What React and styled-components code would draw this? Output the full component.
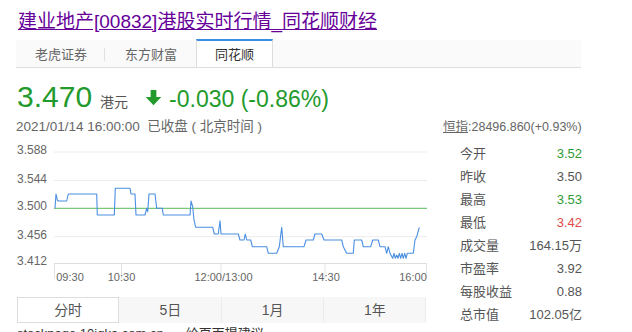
import React from "react";
import styled, { createGlobalStyle } from "styled-components";

const GlobalStyle = createGlobalStyle`
  body {
    margin: 0;
    background: #fff;
    font-family: "Liberation Sans", "Noto Sans CJK SC", sans-serif;
  }
`;

const Page = styled.div`
  width: 632px;
  height: 332px;
  overflow: hidden;
  box-sizing: border-box;
  padding: 10px 0 0 16px;
`;

const Title = styled.a`
  display: inline-block;
  margin-left: 2px;
  font-size: 19px;
  line-height: 24px;
  color: #660099;
  text-decoration: underline;
`;

const TabBar = styled.div`
  display: flex;
  width: 565px;
  height: 27px;
  margin-top: 6px;
  background: #fafafa;
  border-bottom: 1px solid #dddddd;
`;

const Tab = styled.div`
  position: relative;
  padding: 0 18px;
  font-size: 13px;
  line-height: 27px;
  color: ${(p) => (p.$active ? "#333" : "#666")};
  background: ${(p) => (p.$active ? "#fff" : "transparent")};
  box-sizing: border-box;
  height: ${(p) => (p.$active ? "28px" : "27px")};
  border-top: 2px solid ${(p) => (p.$active ? "#3b8fe0" : "transparent")};
  border-left: 1px solid ${(p) => (p.$active ? "#dddddd" : "transparent")};
  border-right: 1px solid ${(p) => (p.$active ? "#dddddd" : "transparent")};
  margin-top: -1px;
  &::after {
    content: "";
    display: ${(p) => (p.$sep ? "block" : "none")};
    position: absolute;
    right: 0;
    top: 7px;
    width: 1px;
    height: 13px;
    background: #e0e0e0;
  }
`;

const PriceRow = styled.div`
  display: flex;
  align-items: baseline;
  height: 36px;
  margin-top: 11px;
  padding-left: 1px;
  color: #239a2c;
`;

const Price = styled.span`
  font-size: 30px;
  line-height: 36px;
`;

const Unit = styled.span`
  margin-left: 8px;
  font-size: 14px;
  color: #555;
`;

const Arrow = styled.svg`
  align-self: center;
  margin: 0 7px 0 17px;
`;

const Change = styled.span`
  font-size: 23px;
`;

const Columns = styled.div`
  display: flex;
`;

const LeftCol = styled.div`
  width: 414px;
`;

const RightCol = styled.div`
  width: 140px;
  margin-left: 13px;
`;

const InfoLine = styled.div`
  margin-top: 2px;
  font-size: ${(p) => p.$size || "13.5px"};
  line-height: 20px;
  color: #666;
  white-space: nowrap;
  u {
    text-decoration: underline;
  }
`;

const ChartSvg = styled.svg`
  display: block;
  margin-top: 6px;
`;

const RangeTabs = styled.div`
  display: flex;
  width: 409px;
  height: 26px;
  margin: 12px 0 0 1px;
  background: #f7f7f7;
`;

const RangeTab = styled.div`
  flex: 1;
  box-sizing: border-box;
  text-align: center;
  font-size: 14px;
  line-height: 24px;
  color: #555;
  background: ${(p) => (p.$active ? "#fff" : "transparent")};
  border: 1px solid ${(p) => (p.$active ? "#dddddd" : "transparent")};
  border-right-color: ${(p) => (p.$active ? "#dddddd" : "#ececec")};
`;

const Footer = styled.div`
  display: flex;
  gap: 22px;
  margin: 3px 0 0 1px;
  font-size: 13px;
  line-height: 16px;
  color: #333;
`;

const StatsList = styled.div`
  margin-top: 5px;
`;

const StatRow = styled.div`
  display: flex;
  justify-content: space-between;
  width: 139px;
  box-sizing: border-box;
  padding-left: 17px;
  height: 23px;
  line-height: 23px;
  font-size: 13px;
  color: #555;
`;

const StatValue = styled.span`
  color: ${(p) => p.$color || "#555"};
`;

const stats = [
  { label: "今开", value: "3.52", color: "#2f9a37" },
  { label: "昨收", value: "3.50" },
  { label: "最高", value: "3.53", color: "#2f9a37" },
  { label: "最低", value: "3.42", color: "#e04a4a" },
  { label: "成交量", value: "164.15万" },
  { label: "市盈率", value: "3.92" },
  { label: "每股收益", value: "0.88" },
  { label: "总市值", value: "102.05亿" },
];

const yTicks = [
  { label: "3.588", y: 152 },
  { label: "3.544", y: 180.5 },
  { label: "3.500", y: 208.3 },
  { label: "3.456", y: 236.7 },
  { label: "3.412", y: 263.3 },
];

const xTicks = [
  { label: "09:30", x: 70, tick: 54.5 },
  { label: "10:30", x: 121.5, tick: 121.5 },
  { label: "12:00/13:00", x: 223.5, tick: 221 },
  { label: "14:30", x: 326, tick: 325 },
  { label: "16:00", x: 413, tick: 426.5 },
];

const line = [
  [55, 208.3], [56, 194], [57.3, 200], [58.3, 201], [66.7, 201], [68.3, 194],
  [96.7, 194], [97.3, 215], [114.3, 215], [115.3, 188.3], [130, 188.3],
  [131, 194], [135, 194], [136, 215], [145, 215], [146.7, 208.3],
  [147.7, 211.7], [149, 194], [155, 194], [156.7, 208.3], [162.3, 208.3],
  [163.3, 215], [190, 215], [191, 201], [192.7, 206.7], [194, 220],
  [195.7, 227.3], [212.7, 227.3], [214.3, 234], [218.3, 234], [220, 220.7],
  [221, 234], [238.3, 234], [240, 240], [244, 240], [245.3, 234],
  [246.7, 240], [250.7, 240], [252.3, 246.7], [266.7, 246.7], [268.3, 253.3],
  [276.7, 253.3], [279.3, 246.7], [281.7, 227.3], [283.3, 246.7],
  [304, 246.7], [306, 240], [313.3, 240], [315, 234], [321.7, 234],
  [324, 240], [341.7, 240], [343.3, 246.7], [346.7, 253.3], [353.3, 253.3],
  [354.3, 240], [361.7, 240], [363.3, 246.7], [370.7, 246.7], [372.7, 240],
  [378.3, 240], [380, 246.7], [385, 246.7], [386.7, 253.3], [388.3, 246.7],
  [390, 253.3], [392.7, 258.3], [394, 253.3], [395.3, 258.3], [396.7, 255],
  [398, 258.3], [399.3, 253.3], [400.7, 258.3], [402, 253.3], [403.3, 258.3],
  [404.7, 253.3], [406, 258.3], [407.3, 253.3], [413.3, 253.3], [415, 240],
  [416.7, 236.7], [419.3, 227.3],
];

const Chart = () => (
  <ChartSvg width="414" height="142" viewBox="16 143 414 142">
    {yTicks.map((t, i) => (
      <g key={t.label}>
        {i < 4 && i !== 2 && (
          <line x1="54" x2="427" y1={t.y} y2={t.y} stroke="#ececec" strokeWidth="1" />
        )}
        <text x="17" y={t.y + 2} fontSize="12" fill="#666" fontFamily="Liberation Sans">
          {t.label}
        </text>
      </g>
    ))}
    <line x1="54" x2="427" y1="263.5" y2="263.5" stroke="#dddddd" strokeWidth="1" />
    {xTicks.map((t) => (
      <g key={t.label}>
        <line x1={t.tick} x2={t.tick} y1="263" y2="278" stroke="#e3e3e3" strokeWidth="1" />
        <text
          x={t.x}
          y="281"
          fontSize="11"
          fill="#666"
          textAnchor="middle"
          fontFamily="Liberation Sans"
        >
          {t.label}
        </text>
      </g>
    ))}
    <line x1="54" x2="427" y1="208.3" y2="208.3" stroke="#5cb85c" strokeWidth="1" />
    <polyline
      points={line.map((p) => p.join(",")).join(" ")}
      fill="none"
      stroke="#4a8fe2"
      strokeWidth="1.1"
      strokeLinejoin="round"
    />
  </ChartSvg>
);

export default function App() {
  return (
    <>
      <GlobalStyle />
      <Page>
        <Title href="#">建业地产[00832]港股实时行情_同花顺财经</Title>
        <TabBar>
          <Tab $sep>老虎证券</Tab>
          <Tab>东方财富</Tab>
          <Tab $active>同花顺</Tab>
        </TabBar>
        <PriceRow>
          <Price>3.470</Price>
          <Unit>港元</Unit>
          <Arrow width="17" height="17" viewBox="0 0 16 16">
            <path d="M5.3 1h5.4v6.6h4.6L8 15.2 0.7 7.6h4.6z" fill="#239a2c" />
          </Arrow>
          <Change>-0.030 (-0.86%)</Change>
        </PriceRow>
        <Columns>
          <LeftCol>
            <InfoLine>2021/01/14 16:00:00&nbsp; 已收盘 ( 北京时间 )</InfoLine>
            <Chart />
            <RangeTabs>
              <RangeTab $active>分时</RangeTab>
              <RangeTab>5日</RangeTab>
              <RangeTab>1月</RangeTab>
              <RangeTab>1年</RangeTab>
            </RangeTabs>
            <Footer>
              <span>stockpage.10jqka.com.cn</span>
              <span>给页面提建议</span>
            </Footer>
          </LeftCol>
          <RightCol>
            <InfoLine $size="12.5px">
              <u>恒指</u>:28496.860(+0.93%)
            </InfoLine>
            <StatsList>
              {stats.map((s) => (
                <StatRow key={s.label}>
                  <span>{s.label}</span>
                  <StatValue $color={s.color}>{s.value}</StatValue>
                </StatRow>
              ))}
            </StatsList>
          </RightCol>
        </Columns>
      </Page>
    </>
  );
}
